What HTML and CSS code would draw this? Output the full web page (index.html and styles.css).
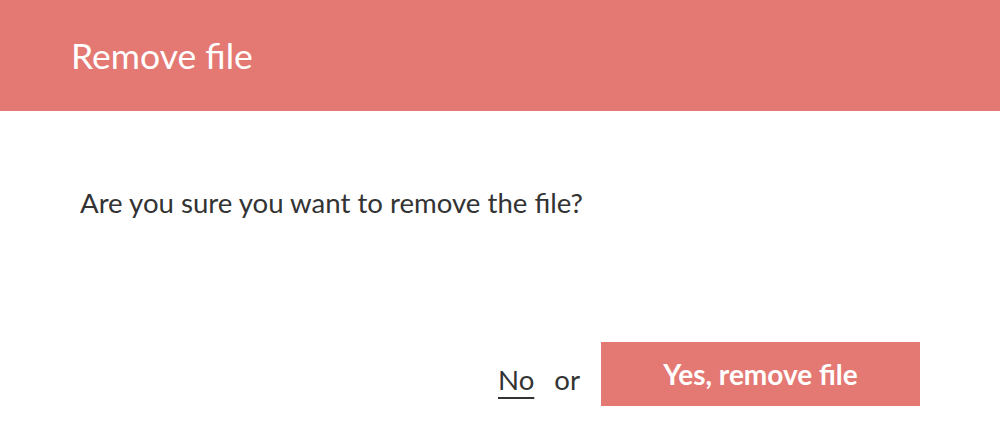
FILE: index.html
```html
<!DOCTYPE html>
<html>
<head>
<meta charset="utf-8">
<link rel="stylesheet" href="styles.css">
</head>
<body>
<div class="dialog">
  <header class="dialog-header">
    <h1 class="dialog-title">Remove file</h1>
  </header>
  <div class="dialog-body">
    <p class="dialog-text">Are you sure you want to remove the file?</p>
  </div>
  <footer class="dialog-footer">
    <a class="link-no" href="#">No</a>
    <span class="or">or</span>
    <button class="btn-confirm">Yes, remove file</button>
  </footer>
</div>
</body>
</html>
```
FILE: styles.css
```css
html, body {
  margin: 0;
  padding: 0;
  background: #ffffff;
}
body {
  font-family: Lato, "Noto Sans", sans-serif;
  color: #333333;
}
.dialog {
  width: 1000px;
  height: 436px;
  display: flex;
  flex-direction: column;
}
.dialog-header {
  background: #e47873;
  height: 111px;
  display: flex;
  align-items: center;
  padding-left: 71px;
  box-sizing: border-box;
}
.dialog-title {
  margin: 0;
  font-weight: 400;
  font-size: 35.5px;
  color: #ffffff;
  line-height: 36px;
}
.dialog-body {
  padding: 76px 80px 0 80px;
}
.dialog-text {
  margin: 0;
  font-size: 27.6px;
  line-height: 32px;
}
.dialog-footer {
  margin-top: auto;
  padding: 0 80px 30px 0;
  display: flex;
  justify-content: flex-end;
  align-items: center;
}
.link-no {
  color: #333333;
  font-size: 27.6px;
  margin-top: 10px;
  text-decoration: underline;
  text-underline-offset: 7px;
  text-decoration-thickness: 2px;
}
.or {
  font-size: 27.6px;
  margin: 10px 21px 0 20px;
}
.btn-confirm {
  background: #e47873;
  border: none;
  color: #ffffff;
  font-family: Lato, "Noto Sans", sans-serif;
  font-weight: 700;
  font-size: 28px;
  width: 319px;
  height: 64px;
  padding: 0;
}
```
